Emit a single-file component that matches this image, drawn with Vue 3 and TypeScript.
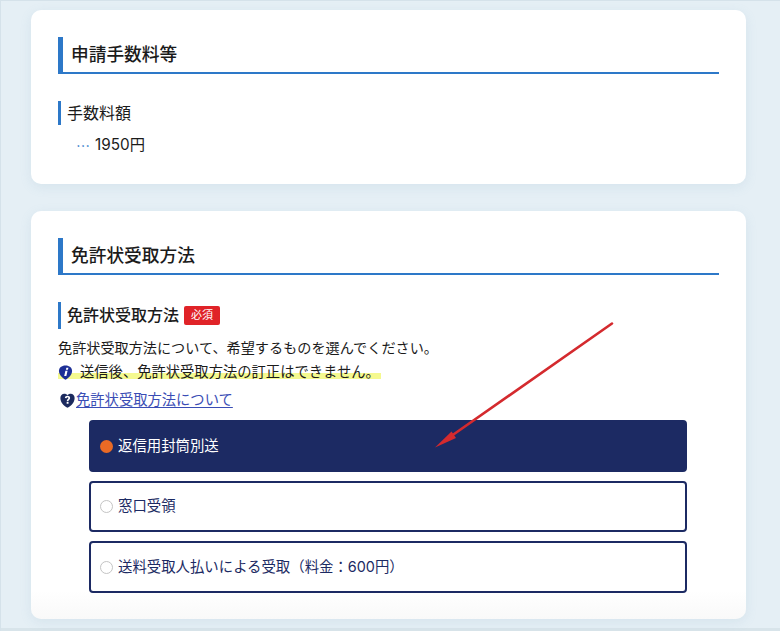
<script setup lang="ts">
interface Option {
  label: string;
  selected: boolean;
}
const options: Option[] = [
  { label: "返信用封筒別送", selected: true },
  { label: "窓口受領", selected: false },
  { label: "送料受取人払いによる受取（料金：600円）", selected: false },
];
</script>

<template>
  <div class="page">
    <section class="card card-fee">
      <h2 class="heading">申請手数料等</h2>
      <h3 class="sub">手数料額</h3>
      <p class="value"><span class="dots">…</span><span>1950円</span></p>
    </section>

    <section class="card card-receive">
      <h2 class="heading">免許状受取方法</h2>
      <h3 class="sub sub-req">免許状受取方法<span class="badge">必須</span></h3>
      <p class="line">免許状受取方法について、希望するものを選んでください。</p>
      <p class="line notice">
        <svg class="icon" viewBox="0 0 16 16" width="15" height="15" aria-hidden="true">
          <path d="M8 .4C12.2 .4 15 2.8 15 6.4C15 10.2 11.8 13.4 8 15.8C4.2 13.4 1 10.2 1 6.4C1 2.8 3.8 .4 8 .4Z" fill="#1d2f96" />
          <path d="M8.9 2.9h2.2l-.5 2.1H8.4zM7.9 6h2.3L8.9 11.6H6.6z" fill="#fff" />
        </svg>
        <span class="notice-text">送信後、免許状受取方法の訂正はできません。</span>
      </p>
      <p class="help">
        <svg class="icon help-icon" viewBox="0 0 16 16" width="15" height="15" aria-hidden="true">
          <path d="M8 15.8C3.8 13.4 .4 9.8 .4 5.2C.4 2.6 2.2 .8 4.6 .8C6 .8 7.2 1.4 8 2.4C8.8 1.4 10 .8 11.4 .8C13.8 .8 15.6 2.6 15.6 5.2C15.6 9.8 12.2 13.4 8 15.8Z" fill="#1c2a5e" />
          <path d="M5.2 5.2C5.3 3.7 6.5 2.9 8 2.9C9.6 2.9 10.8 3.8 10.8 5.2C10.8 7 9 7 9 8.8H7.2C7.2 6.4 8.9 6.4 8.9 5.3C8.9 4.8 8.6 4.5 8 4.5C7.4 4.5 7.1 4.9 7 5.5ZM7.1 9.6H9.1V11.5H7.1Z" fill="#fff" />
        </svg>
        <a class="link" href="#">免許状受取方法について</a>
      </p>
      <div class="options">
        <div v-for="o in options" :key="o.label" class="option" :class="{ selected: o.selected }">
          <span class="radio"></span>
          <span class="option-text">{{ o.label }}</span>
        </div>
      </div>
    </section>

    <svg class="arrow" width="780" height="631" viewBox="0 0 780 631" aria-hidden="true">
      <line x1="612" y1="323.5" x2="447" y2="439" stroke="#d42a2e" stroke-width="2.6" stroke-linecap="round" />
      <path d="M435 447.5L451.5 431.5L456 438Z" fill="#d42a2e" />
    </svg>
  </div>
</template>

<style>
html,
body {
  margin: 0;
  background: #e5eff5;
}
</style>

<style scoped>
.page {
  position: relative;
  box-sizing: border-box;
  width: 780px;
  height: 631px;
  overflow: hidden;
  padding: 10px 34px 0 31px;
  background: #e5eff5;
  font-family: Inter, "Noto Sans CJK JP", sans-serif;
  color: #1b1b1b;
  box-shadow: inset 1px 1px 0 #d5e2ea, inset 0 -3px 0 #d8e4ea;
}
.card {
  box-sizing: border-box;
  background: #fff;
  border-radius: 10px;
  padding: 27px 27px 0;
  box-shadow: 0 3px 12px rgba(120, 160, 190, 0.14);
}
.card-fee {
  height: 174px;
}
.card-receive {
  height: 408px;
  margin-top: 27px;
  background: linear-gradient(#fff 93%, #f9f9f9 100%);
}
.heading {
  box-sizing: border-box;
  height: 37px;
  margin: 0;
  padding-left: 8px;
  border-left: 5px solid #2d78c8;
  border-bottom: 2px solid #2d78c8;
  font-size: 17.7px;
  font-weight: 500;
  line-height: 35px;
}
.sub {
  box-sizing: border-box;
  height: 24px;
  margin: 27px 0 0;
  padding-left: 6px;
  border-left: 3px solid #2d78c8;
  font-size: 16px;
  font-weight: 400;
  line-height: 24px;
}
.sub-req {
  height: 27px;
  font-weight: 500;
  line-height: 27px;
  display: flex;
  align-items: center;
}
.badge {
  width: 36px;
  height: 19px;
  margin-left: 5px;
  background: #e02328;
  border-radius: 2px;
  color: #fff;
  font-size: 11px;
  font-weight: 400;
  line-height: 19px;
  text-align: center;
}
.value {
  display: flex;
  align-items: center;
  gap: 5px;
  margin: 8px 0 0 18px;
  font-size: 15.3px;
  line-height: 24px;
}
.dots {
  color: #2d78c8;
  font-family: "Noto Sans CJK JP", sans-serif;
  font-size: 14px;
}
.line {
  margin: 7px 0 0;
  font-size: 14.15px;
  line-height: 24px;
}
.notice {
  display: flex;
  align-items: center;
  width: 323px;
  height: 24px;
  margin-top: 0;
  background: linear-gradient(transparent 55%, #f5f98f 55%, #f5f98f 79%, transparent 79%);
}
.icon {
  flex: none;
}
.notice-text {
  margin-left: 7px;
  font-size: 14.3px;
}
.help {
  display: flex;
  align-items: center;
  height: 24px;
  margin: 4px 0 0;
  font-size: 14.3px;
  line-height: 24px;
}
.help-icon {
  margin-left: 2px;
  margin-right: 1px;
}
.link {
  color: #3a4db5;
  text-decoration: underline;
  text-underline-offset: 2px;
}
.options {
  display: flex;
  flex-direction: column;
  gap: 9px;
  margin: 8px 32px 0 31px;
}
.option {
  box-sizing: border-box;
  display: flex;
  align-items: center;
  height: 51.5px;
  padding-left: 9px;
  border: 2px solid #1c2a63;
  border-radius: 4px;
  color: #1c2a63;
  font-size: 14.4px;
}
.option-text {
  margin-bottom: 3px;
}
.option.selected {
  background: #1c2a63;
  color: #fff;
}
.radio {
  box-sizing: border-box;
  width: 13px;
  height: 13px;
  margin-top: 1px;
  margin-right: 5px;
  border: 1px solid #c4c4c4;
  border-radius: 50%;
  background: #fff;
}
.selected .radio {
  border: none;
  background: #ea6a25;
}
.arrow {
  position: absolute;
  left: 0;
  top: 0;
  pointer-events: none;
}
</style>
